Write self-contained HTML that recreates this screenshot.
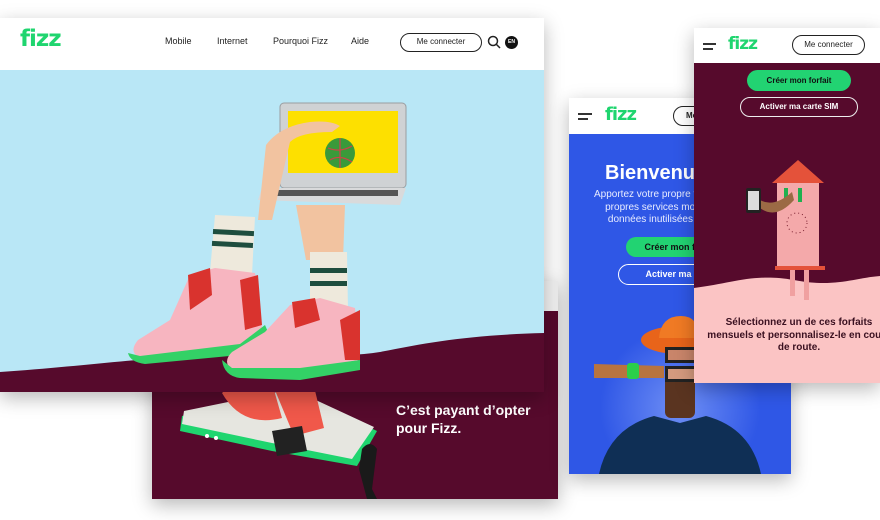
<!DOCTYPE html>
<html><head><meta charset="utf-8"><style>
*{margin:0;padding:0;box-sizing:border-box}
body{width:880px;height:520px;background:#fff;position:relative;overflow:hidden;font-family:"Liberation Sans",sans-serif}
.abs{position:absolute}
.card{position:absolute;overflow:hidden;box-shadow:0 6px 18px rgba(0,0,0,.28)}
.logo{font-weight:bold;color:#1fd56f;letter-spacing:-1px;font-family:"DejaVu Sans",sans-serif}
.btn{position:absolute;border-radius:20px;font-size:9px;font-weight:bold;text-align:center}
</style></head><body>

<!-- back card -->
<div class="card" style="left:152px;top:281px;width:406px;height:218px;background:#560a2c">
 <div class="abs" style="left:0;top:0;width:406px;height:30px;background:#f3f3f3"></div>
 <svg class="abs" style="left:0;top:0" width="406" height="218">
  <polygon points="30,135 140,110 225,150 205,185 120,170 28,150" fill="#1fd56f"/>
  <polygon points="32,130 140,108 222,146 200,178 120,162 30,143" fill="#e6e6e0"/>
  <path d="M70,112 q20,-20 50,-10 l10,35 q-40,10 -60,-25z" fill="#f0584a"/>
  <path d="M120,102 l40,-5 l12,50 l-30,8z" fill="#f0584a"/>
  <path d="M120,150 l30,-5 l5,25 l-30,5z" fill="#222"/>
  <path d="M210,168 q8,-10 15,0 l-5,40 l5,10 l-10,0 l-8,-30z" fill="#1a1a1a"/>
  <circle cx="55" cy="155" r="2" fill="#fff"/><circle cx="64" cy="157" r="2" fill="#fff"/>
 </svg>
 <div class="abs" style="left:244px;top:120px;color:#fff;font-size:14px;font-weight:bold;line-height:18px">C’est payant d’opter<br>pour Fizz.</div>
</div>

<!-- desktop card -->
<div class="card" style="left:0;top:18px;width:544px;height:374px;background:#b9e7f6">
 <div class="abs" style="left:0;top:0;width:544px;height:52px;background:#fff"></div>
 <div class="abs logo" style="left:20px;top:8px;font-size:23px">fizz</div>
 <div class="abs" style="left:165px;top:18px;font-size:9px;color:#222">Mobile</div>
 <div class="abs" style="left:217px;top:18px;font-size:9px;color:#222">Internet</div>
 <div class="abs" style="left:273px;top:18px;font-size:9px;color:#222">Pourquoi Fizz</div>
 <div class="abs" style="left:351px;top:18px;font-size:9px;color:#222">Aide</div>
 <div class="btn" style="left:400px;top:15px;width:82px;height:19px;border:1.5px solid #222;font-weight:normal;font-size:8px;line-height:16px;color:#222">Me connecter</div>
 <svg class="abs" style="left:487px;top:17px" width="14" height="14"><circle cx="6" cy="6" r="4.5" fill="none" stroke="#222" stroke-width="1.5"/><line x1="9.5" y1="9.5" x2="13" y2="13" stroke="#222" stroke-width="1.5"/></svg>
 <div class="abs" style="left:505px;top:18px;width:13px;height:13px;border-radius:50%;background:#111;color:#fff;font-size:5px;line-height:13px;text-align:center;font-weight:bold">EN</div>
 <svg class="abs" style="left:0;top:52px" width="544" height="322">
  <path d="M0,302 C60,298 110,292 160,288 C250,282 330,290 380,282 C430,272 470,265 544,263 L544,322 L0,322Z" fill="#560a2c"/>
  <!-- laptop -->
  <rect x="280" y="33" width="126" height="85" rx="4" fill="#cfd2d4" stroke="#9a9da0"/>
  <rect x="288" y="41" width="110" height="62" fill="#fde000"/>
  <circle cx="340" cy="83" r="15" fill="#3a9a3a"/><path d="M328,78 q12,5 24,-2 M330,90 q10,-6 22,2 M340,68 l0,30" stroke="#d2404a" stroke-width="1.2" fill="none"/>
  <polygon points="262,118 406,118 400,135 258,130" fill="#d9dadb"/>
  <rect x="272" y="120" width="126" height="6" fill="#555"/>
  <!-- arm -->
  <path d="M228,150 L258,150 L266,75 Q280,56 310,52 Q330,50 340,56 L332,62 Q300,62 290,72 L272,150Z" fill="#f2c3a0"/>
  <path d="M296,135 L345,135 L343,190 L306,190Z" fill="#f2c3a0"/>
  <!-- socks -->
  <path d="M215,145 L255,147 L252,205 L210,202Z" fill="#eee9dc"/>
  <rect x="213" y="160" width="41" height="5" fill="#1e4d3e" transform="rotate(3 233 162)"/>
  <rect x="212" y="172" width="41" height="5" fill="#1e4d3e" transform="rotate(3 233 174)"/>
  <path d="M310,182 L347,182 L348,240 L310,240Z" fill="#eee9dc"/>
  <rect x="310" y="198" width="37" height="5" fill="#1e4d3e"/><rect x="310" y="211" width="37" height="5" fill="#1e4d3e"/>
  <!-- shoes -->
  <path d="M190,205 L215,198 L255,203 L262,258 L240,276 L140,288 Q128,282 138,270 L170,250Z" fill="#f7b5c0"/>
  <path d="M188,205 L210,198 L212,225 L190,240Z" fill="#d9332e"/>
  <path d="M240,210 L258,205 L262,255 L245,260Z" fill="#d9332e"/>
  <path d="M128,283 Q130,292 145,294 L240,285 L268,262 L265,255 L240,274 L140,286Z" fill="#33d166"/>
  <path d="M290,235 L320,228 L355,238 L360,290 L300,300 L232,300 Q222,292 232,282 L265,262Z" fill="#f7b5c0"/>
  <path d="M292,232 L315,228 L320,250 L295,258Z" fill="#d9332e"/>
  <path d="M340,250 L360,240 L360,290 L345,290Z" fill="#d9332e"/>
  <path d="M222,290 Q224,306 240,308 L300,310 L360,300 L360,290 L300,298 L232,298Z" fill="#33d166"/>
 </svg>
</div>

<!-- mobile blue -->
<div class="card" style="left:569px;top:98px;width:222px;height:376px;background:#2f57e6">
 <div class="abs" style="left:0;top:0;width:222px;height:36px;background:#fff"></div>
 <div class="abs" style="left:9px;top:15px;width:14px;height:2px;background:#333"></div>
 <div class="abs" style="left:9px;top:20px;width:10px;height:2px;background:#333"></div>
 <div class="abs logo" style="left:36px;top:6px;font-size:18px">fizz</div>
 <div class="btn" style="left:104px;top:8px;width:70px;height:20px;border:1.5px solid #222;font-size:8px;line-height:17px;text-align:left;padding-left:12px;color:#222">Me connecter</div>
 <div class="abs" style="left:36px;top:64px;color:#fff;font-size:20px;font-weight:bold;white-space:nowrap">Bienvenue chez Fizz</div>
 <div class="abs" style="left:25px;top:91px;width:200px;color:#e8ecff;font-size:10px;line-height:12.7px;white-space:nowrap">Apportez votre propre téléphone,<br>&nbsp;&nbsp;&nbsp;&nbsp;propres services mobiles<br>&nbsp;&nbsp;&nbsp;&nbsp;&nbsp;données inutilisées à</div>
 <div class="btn" style="left:57px;top:139px;width:110px;height:20px;background:#22d372;color:#111;line-height:20px">Créer mon forfait</div>
 <div class="btn" style="left:49px;top:166px;width:125px;height:21px;border:1.5px solid #fff;color:#fff;line-height:18px">Activer ma carte</div>
 <svg class="abs" style="left:0;top:200px" width="222" height="176">
  <radialGradient id="g"><stop offset="0" stop-color="#6f8ff5"/><stop offset="1" stop-color="#2f57e6"/></radialGradient>
  <circle cx="111" cy="110" r="80" fill="url(#g)"/>
  <path d="M30,176 Q40,130 85,118 L111,125 L137,118 Q182,130 192,176Z" fill="#0f2f55"/>
  <rect x="96" y="70" width="30" height="50" rx="6" fill="#5a3420"/>
  <ellipse cx="110" cy="42" rx="38" ry="14" fill="#e8641a"/>
  <path d="M90,40 Q92,18 112,18 Q130,18 130,40Z" fill="#f07a24"/>
  <rect x="96" y="49" width="34" height="16" fill="#222"/><rect x="99" y="52" width="28" height="10" fill="#c9856a"/>
  <rect x="96" y="68" width="34" height="16" fill="#222"/><rect x="99" y="71" width="28" height="10" fill="#d49a7e"/>
  <path d="M25,66 L95,68 L95,80 L25,80Z" fill="#b8743f"/>
  <rect x="58" y="65" width="12" height="16" rx="3" fill="#2bcf4a"/>
 </svg>
</div>

<!-- mobile maroon -->
<div class="card" style="left:694px;top:28px;width:186px;height:355px;background:#560a2c">
 <div class="abs" style="left:0;top:0;width:186px;height:35px;background:#fff"></div>
 <div class="abs" style="left:9px;top:15px;width:13px;height:2px;background:#333"></div>
 <div class="abs" style="left:9px;top:20px;width:10px;height:2px;background:#333"></div>
 <div class="abs logo" style="left:34px;top:6px;font-size:17px">fizz</div>
 <div class="btn" style="left:98px;top:7px;width:73px;height:20px;border:1.5px solid #222;font-size:8px;line-height:17px;color:#222;font-weight:normal">Me connecter</div>
 <div class="btn" style="left:53px;top:42px;width:104px;height:21px;background:#22d372;color:#111;line-height:21px;font-size:8px">Créer mon forfait</div>
 <div class="btn" style="left:46px;top:69px;width:118px;height:20px;border:1.5px solid #eee;color:#fff;line-height:17px;font-size:8px">Activer ma carte SIM</div>
 <svg class="abs" style="left:0;top:100px" width="186" height="255">
  <path d="M0,160 C40,155 60,145 100,152 C140,160 160,150 186,148 L186,255 L0,255Z" fill="#fbc4c4"/>
  <path d="M78,55 L104,32 L130,55Z" fill="#e4523a"/>
  <rect x="83" y="55" width="42" height="85" fill="#f4a9aa"/>
  <rect x="81" y="138" width="50" height="4" fill="#e4523a"/>
  <circle cx="103" cy="95" r="10" fill="none" stroke="#7a2030" stroke-width="1" stroke-dasharray="1 3"/>
  <rect x="96" y="142" width="5" height="26" fill="#f0a0a0"/><rect x="110" y="142" width="5" height="30" fill="#f0a0a0"/>
  <rect x="90" y="60" width="4" height="14" fill="#1fb04f"/><rect x="104" y="60" width="4" height="14" fill="#1fb04f"/>
  <path d="M66,72 Q80,80 98,64 L100,72 Q82,92 66,80Z" fill="#9b6a45"/>
  <rect x="52" y="60" width="15" height="25" rx="2" fill="#222"/><rect x="54" y="63" width="11" height="19" fill="#ddd"/>
 </svg>
 <div class="abs" style="left:0;top:289px;width:210px;text-align:center;color:#3a1020;font-size:10px;font-weight:bold;line-height:12.5px;white-space:nowrap">Sélectionnez un de ces forfaits<br>mensuels et personnalisez-le en cours<br>de route.</div>
</div>
</body></html>
